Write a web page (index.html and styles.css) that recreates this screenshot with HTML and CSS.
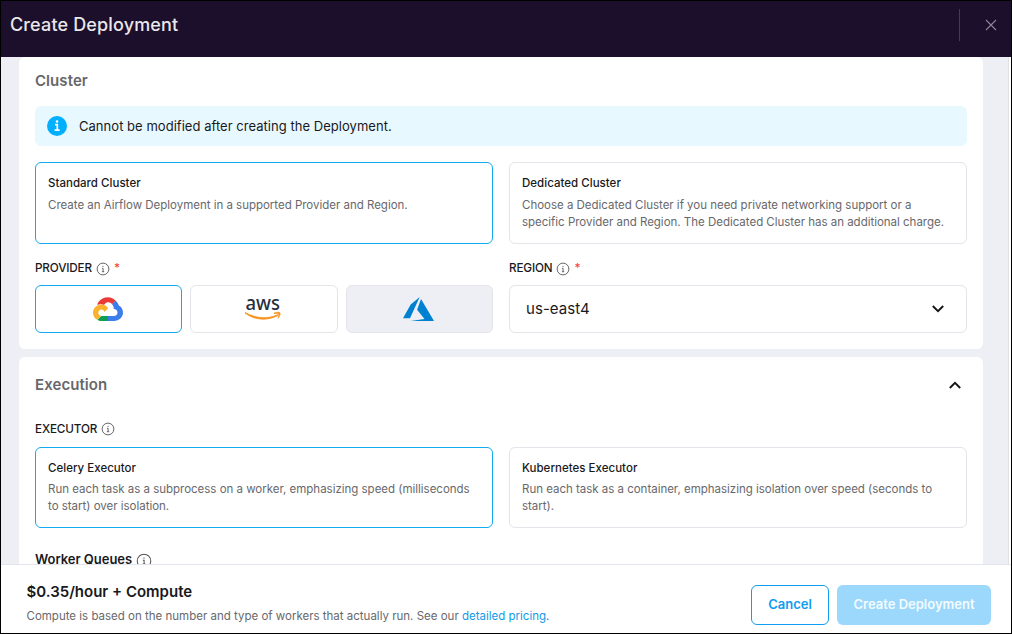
FILE: index.html
```html
<!DOCTYPE html>
<html lang="en">
<head>
<meta charset="utf-8">
<title>Create Deployment</title>
<link rel="stylesheet" href="styles.css">
</head>
<body>
<svg class="defs" width="0" height="0" aria-hidden="true">
  <symbol id="info" viewBox="0 0 14 14">
    <circle cx="7" cy="7" r="5.900" fill="none" stroke="#55555a" stroke-width=".9"/>
    <path d="M7 3.900v1.100M6 6.400h1.100v3.300M5.900 9.700h2.300" fill="none" stroke="#55555a" stroke-width=".9"/>
  </symbol>
</svg>
<div class="modal">
  <header class="header">
    <h1 class="header-title">Create Deployment</h1>
    <div class="header-close">
      <svg width="12" height="12" viewBox="0 0 12 12"><path d="M1 1l10 10M11 1L1 11" fill="none" stroke="#8d8697" stroke-width="1.100"/></svg>
    </div>
  </header>

  <main class="content">
    <section class="panel panel-cluster">
      <h2 class="panel-title">Cluster</h2>
      <div class="alert">
        <svg width="20" height="20" viewBox="0 0 20 20"><circle cx="10" cy="10" r="10" fill="#00b0ff"/><circle cx="10" cy="5.500" r="1.300" fill="#fff"/><path d="M8 8.600h2.300v5.200M7.600 14.200h5" fill="none" stroke="#fff" stroke-width="1.700"/></svg>
        <span class="alert-text">Cannot be modified after creating the Deployment.</span>
      </div>
      <div class="columns cards">
        <div class="card selected">
          <h3 class="card-title">Standard Cluster</h3>
          <p class="card-text">Create an Airflow Deployment in a supported Provider and Region.</p>
        </div>
        <div class="card">
          <h3 class="card-title">Dedicated Cluster</h3>
          <p class="card-text">Choose a Dedicated Cluster if you need private networking support or a<br>specific Provider and Region. The Dedicated Cluster has an additional charge.</p>
        </div>
      </div>
      <div class="columns fields">
        <div>
          <div class="label"><span class="label-text">PROVIDER</span><svg class="info"><use href="#info"/></svg><span class="required">*</span></div>
          <div class="providers">
            <div class="provider selected">
              <svg width="30" height="24" viewBox="0 0 30 24">
                <path d="M19.200 7.200L22.700 3.700C20.700 1.600 18 .2 14.800 .2C9.800 .2 5.600 3.400 4.100 7.800C6.800 6.800 9.300 7 11 8C11.900 6.300 13.300 5.300 14.900 5.200C16.500 5 18 5.900 19.200 7.200Z" fill="#ea3a35"/>
                <path d="M22.600 3.700L19 7.300C20.400 8.600 20.900 10.400 20.700 12C23 12 24.500 13.600 24.500 15.600C24.500 17.600 22.900 19 21 19H14.800V24H21C26 24 30 20.200 30 15.600C30 12.600 28.500 10 25.900 8.500C25.300 6.600 24.200 5 22.600 3.700Z" fill="#3b7ded"/>
                <path d="M15 19H8.300L4.300 22.700C5.500 23.600 6.900 24 8.400 24H15Z" fill="#109d50"/>
                <path d="M8.400 7.400C3.600 7.400 0 11.200 0 15.700C0 18.600 1.500 21.200 4.200 22.800L8.100 19C6.600 18.600 5.300 17.400 5.300 15.700C5.300 13.800 6.700 12.400 8.400 12.400C10 12.400 11 13.300 11.500 14.900L15.200 11.200C13.700 8.900 11.300 7.400 8.400 7.400Z" fill="#fbb12d"/>
              </svg>
            </div>
            <div class="provider">
              <svg class="aws" width="38" height="28" viewBox="0 0 38 28">
                <text class="aws-word" x="1.500" y="14.900" textLength="34.500" lengthAdjust="spacingAndGlyphs">aws</text>
                <path d="M1 18C11 25.500 24 26 34 20.300L33.500 19.800C24 24.300 12 23.800 1.400 17.600Z" fill="#f7931f" stroke="#f7931f" stroke-width=".9"/>
                <path d="M30 18.100C32 17 35.300 17 36 17.700C36.700 18.600 35.600 21.800 33.900 23.300C34.600 21.300 35.100 19.600 34.700 19C34.200 18.300 32 18.300 30 18.500Z" fill="#f7931f" stroke="#f7931f" stroke-width=".7"/>
              </svg>
            </div>
            <div class="provider disabled">
              <svg width="31" height="24" viewBox="0 0 31 24"><path d="M16.700 0L7.700 7.600L0 21.200H7ZM18 2L14.100 12.800L21.500 22L7.500 24H31Z" fill="#0080d0"/></svg>
            </div>
          </div>
        </div>
        <div>
          <div class="label"><span class="label-text">REGION</span><svg class="info"><use href="#info"/></svg><span class="required">*</span></div>
          <div class="select">
            <span>us-east4</span>
            <svg width="12" height="8" viewBox="0 0 12 8"><path d="M.8 1L6 6.200L11.200 1" fill="none" stroke="#161618" stroke-width="1.900"/></svg>
          </div>
        </div>
      </div>
    </section>

    <section class="panel panel-execution">
      <div class="panel-heading">
        <h2 class="panel-title">Execution</h2>
        <svg width="12" height="8" viewBox="0 0 12 8"><path d="M.8 7L6 1.800L11.200 7" fill="none" stroke="#161618" stroke-width="1.900"/></svg>
      </div>
      <div class="label label-executor"><span class="label-text">EXECUTOR</span><svg class="info"><use href="#info"/></svg></div>
      <div class="columns cards executors">
        <div class="card selected">
          <h3 class="card-title">Celery Executor</h3>
          <p class="card-text">Run each task as a subprocess on a worker, emphasizing speed (milliseconds<br>to start) over isolation.</p>
        </div>
        <div class="card">
          <h3 class="card-title">Kubernetes Executor</h3>
          <p class="card-text">Run each task as a container, emphasizing isolation over speed (seconds to<br>start).</p>
        </div>
      </div>
      <div class="queues"><span>Worker Queues</span><svg class="info"><use href="#info"/></svg></div>
    </section>
  </main>

  <footer class="footer">
    <div class="pricing">
      <div class="price">$0.35/hour + Compute</div>
      <div class="price-note">Compute is based on the number and type of workers that actually run. See our <a class="link">detailed pricing</a>.</div>
    </div>
    <div class="actions">
      <button class="button cancel">Cancel</button>
      <button class="button create">Create Deployment</button>
    </div>
  </footer>
</div>
</body>
</html>
```
FILE: styles.css
```css
* { box-sizing: border-box; }
body {
  margin: 0;
  font-family: Inter, "Liberation Sans", sans-serif;
  color: #19191c;
}
h1, h2, h3, p { margin: 0; }
svg { display: block; flex: none; }
.defs { position: absolute; }
.modal {
  display: flex;
  flex-direction: column;
  width: 1012px;
  height: 634px;
  border: 1px solid #000;
  background: #fff;
  overflow: hidden;
}
.header {
  display: flex;
  justify-content: space-between;
  height: 56px;
  flex: none;
  padding: 8px 14px 0 9px;
  background: #1b0f2b;
}
.header-title {
  font-size: 18px;
  line-height: 32px;
  font-weight: 500;
  letter-spacing: 0.15px;
  color: #e9e7ec;
}
.header-close {
  display: flex;
  align-items: center;
  height: 32px;
  padding-left: 25px;
  border-left: 1px solid #453c52;
}
.content {
  display: flex;
  flex-direction: column;
  gap: 8px;
  width: 1008px;
  height: 507px;
  flex: none;
  padding: 0 25px 0 18px;
  background: #eeeff4;
  border-right: 1px solid #e2e2e5;
  overflow: hidden;
}
.panel {
  flex: none;
  padding: 0 16px 16px;
  border-radius: 6px;
  background: #fff;
}
.panel-cluster { height: 292px; padding-top: 12px; }
.panel-execution { height: 260px; padding-top: 16px; }
.panel-title {
  font-size: 15px;
  line-height: 24px;
  font-weight: 600;
  letter-spacing: 0.07px;
  color: #67676b;
}
.panel-heading {
  display: flex;
  align-items: center;
  justify-content: space-between;
  padding-right: 6px;
}
.alert {
  display: flex;
  align-items: center;
  gap: 12px;
  height: 40px;
  margin-top: 13px;
  padding-left: 12px;
  border-radius: 6px;
  background: #e8f8ff;
}
.alert-text { font-size: 13px; letter-spacing: 0.035px; }
.columns {
  display: grid;
  grid-template-columns: 458px 458px;
  gap: 16px;
}
.cards { height: 82px; margin-top: 16px; }
.card, .provider, .select {
  border: 1px solid #e4e4ea;
  border-radius: 6px;
}
.card { padding: 11px 12px; }
.card.selected, .provider.selected { border-color: #12aaf0; }
.card-title {
  font-size: 11.5px;
  line-height: 18px;
  font-weight: 500;
  letter-spacing: 0.02px;
}
.card-text {
  margin-top: 5px;
  font-size: 11.5px;
  line-height: 17px;
  letter-spacing: -0.015px;
  color: #68686c;
  white-space: nowrap;
}
.fields { margin-top: 15px; }
.label {
  display: flex;
  align-items: center;
  height: 16px;
  font-size: 11.7px;
  font-weight: 500;
  letter-spacing: -0.15px;
}
.label-text, .required { padding-top: 2px; }
.info { width: 14px; height: 14px; margin: 3px 0 0 4px; }
.required { margin-left: 4px; color: #f5413b; }
.providers {
  display: grid;
  grid-template-columns: repeat(3, 1fr);
  gap: 8px;
  margin-top: 10px;
}
.provider {
  display: flex;
  align-items: center;
  justify-content: center;
  height: 48px;
  padding-right: 1.5px;
}
.provider.disabled { background: #eeeff4; }
.aws { overflow: visible; }
.aws-word {
  font-family: "Noto Sans", sans-serif;
  font-size: 20px;
  font-weight: 500;
  fill: #252f3e;
}
.select {
  display: flex;
  align-items: center;
  justify-content: space-between;
  height: 48px;
  margin-top: 10px;
  padding: 0 22px 1px 16px;
  font-size: 15px;
  letter-spacing: 0.05px;
}
.label-executor { margin-top: 23px; }
.label-executor .info { margin-top: 1px; }
.executors { height: 81px; margin-top: 11px; }
.executors .card-text { margin-top: 4px; }
.queues {
  display: flex;
  align-items: center;
  height: 20px;
  margin-top: 21px;
  font-size: 13px;
  font-weight: 600;
  letter-spacing: -0.04px;
}
.queues .info { width: 16px; height: 16px; }
.footer {
  display: flex;
  flex: 1;
  justify-content: space-between;
  padding: 16px 20px 0 25.5px;
  border-top: 1px solid #e4e4ec;
}
.price {
  font-size: 15px;
  line-height: 22px;
  font-weight: 600;
}
.price-note {
  margin-top: 4px;
  font-size: 11.5px;
  line-height: 18px;
  color: #68686c;
}
.link { color: #109be8; }
.actions { display: flex; gap: 8px; padding-top: 4px; }
.button {
  height: 40px;
  padding: 0 0 2px;
  border-radius: 6px;
  font: 600 13px/36px Inter, sans-serif;
}
.cancel {
  width: 78px;
  border: 1px solid #109cf1;
  background: #fff;
  color: #109cf1;
}
.create {
  width: 154px;
  padding-bottom: 3px;
  border: 0;
  background: #9bd8fb;
  color: #f4fbff;
}
```
